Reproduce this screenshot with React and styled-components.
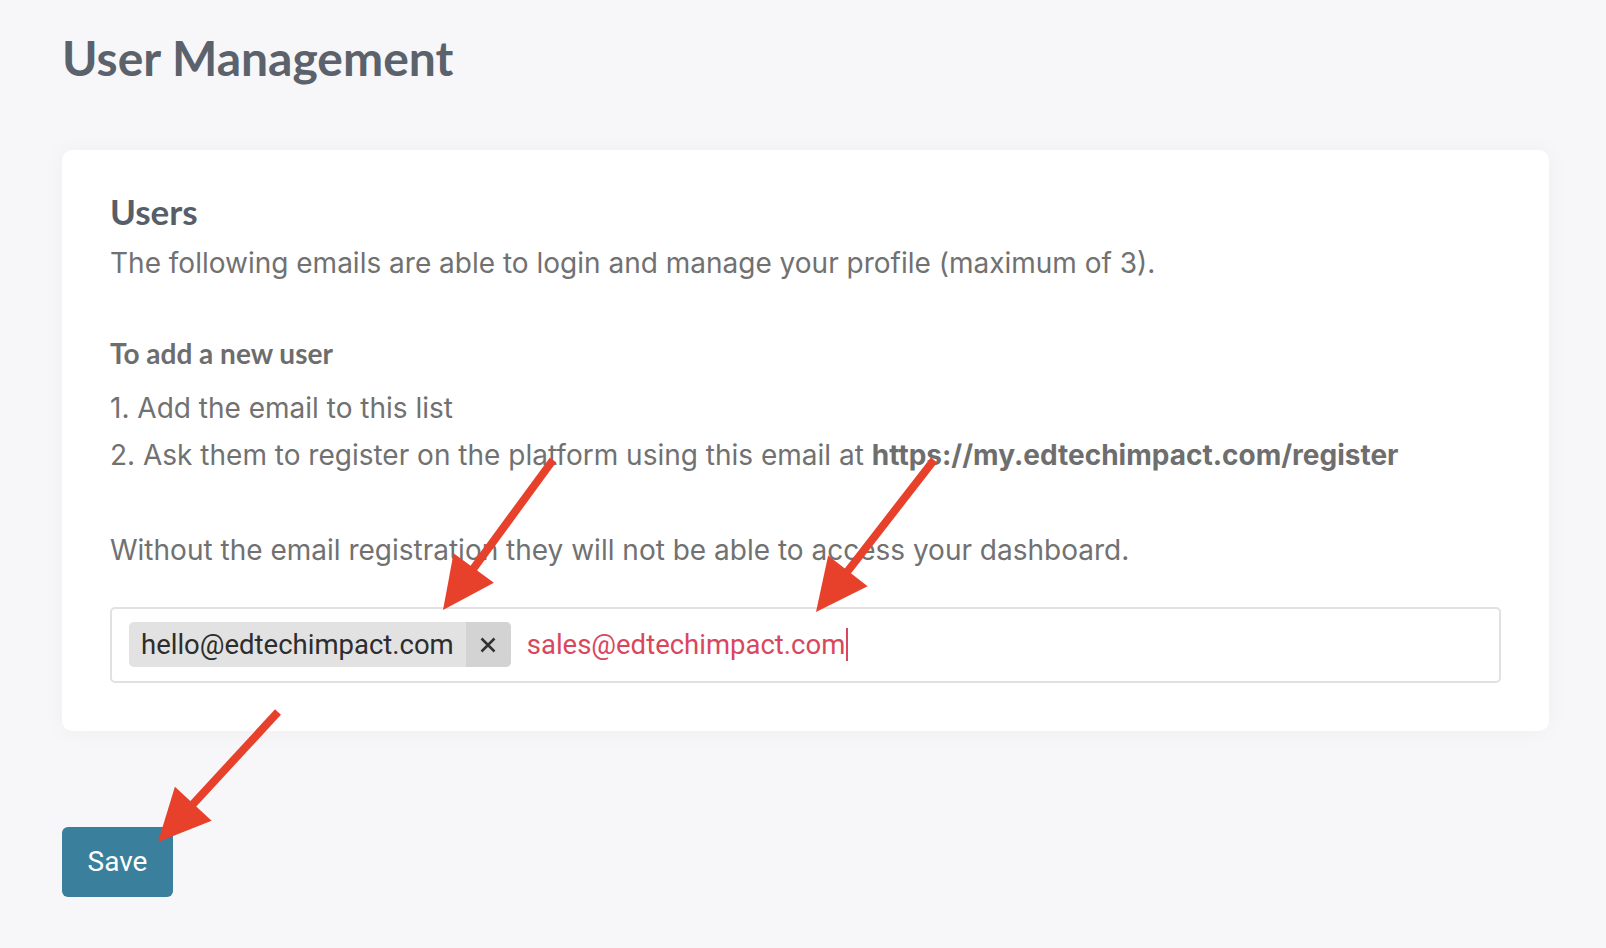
import React from "react";
import styled, { createGlobalStyle } from "styled-components";

const Global = createGlobalStyle`
  html, body { margin: 0; padding: 0; background: #f7f7f9; }
  body { font-family: Inter, "Noto Sans", sans-serif; }
  * { box-sizing: border-box; }
`;

const Page = styled.div`
  position: relative;
  min-height: 948px;
  padding: 29px 57px 40px 62px;
  background: #f7f7f9;
`;

const Title = styled.h1`
  margin: 0;
  font-family: Lato, "Open Sans", sans-serif;
  font-weight: 700;
  font-size: 48px;
  line-height: 58px;
  color: #5b626c;
`;

const Card = styled.section`
  margin-top: 63px;
  background: #ffffff;
  border-radius: 10px;
  box-shadow: 0 0 24px rgba(30, 40, 60, 0.04);
  padding: 40px 48px 48px 48px;
`;

const CardTitle = styled.h2`
  margin: 0;
  font-family: Lato, "Open Sans", sans-serif;
  font-weight: 700;
  font-size: 35px;
  line-height: 42px;
  color: #565e69;
`;

const Text = styled.p`
  margin: ${(p) => p.$mt || 0}px 0 0 0;
  font-family: Inter, sans-serif;
  font-size: 28px;
  line-height: 47.5px;
  color: #717171;
  & strong { font-weight: 700; color: #6e6e6e; }
`;

const SubHead = styled.h3`
  margin: 45.5px 0 0 0;
  font-family: Lato, "Open Sans", sans-serif;
  font-weight: 700;
  font-size: 28px;
  line-height: 40px;
  color: #6d6d6d;
`;

const TagInput = styled.div`
  margin-top: 32px;
  display: flex;
  align-items: center;
  gap: 16px;
  height: 76px;
  padding: 0 17px;
  border: 2px solid #e1e1e1;
  border-radius: 5px;
  background: #fff;
`;

const Chip = styled.div`
  display: flex;
  align-items: stretch;
  height: 45px;
  border-radius: 5px;
  overflow: hidden;
  background: #e2e2e2;
  font-family: Roboto, "Liberation Sans", sans-serif;
  font-size: 27.5px;
  color: #2d2d2d;
`;

const ChipLabel = styled.span`
  display: flex;
  align-items: center;
  padding: 0 12px 0 12px;
`;

const ChipRemove = styled.span`
  display: flex;
  align-items: center;
  justify-content: center;
  width: 45px;
  background: #d3d3d3;
  color: #333;
`;

const Typed = styled.span`
  font-family: Roboto, "Liberation Sans", sans-serif;
  font-size: 27.5px;
  color: #d9475f;
  display: flex;
  align-items: center;
`;

const Caret = styled.span`
  display: inline-block;
  width: 2px;
  height: 33px;
  margin-left: 1px;
  background: #d9475f;
`;

const SaveButton = styled.button`
  display: block;
  margin-top: 96px;
  width: 111px;
  height: 70px;
  padding: 0;
  border: none;
  border-radius: 6px;
  background: #3a7f9c;
  color: #fff;
  font-family: Roboto, "Liberation Sans", sans-serif;
  font-size: 28px;
  cursor: pointer;
`;

const Annotations = styled.svg`
  position: absolute;
  left: 0;
  top: 0;
  width: 1606px;
  height: 948px;
  pointer-events: none;
`;

function Arrow({ tail, tip, head = 52, width = 50, stroke = 8 }) {
  const [x1, y1] = tail;
  const [x2, y2] = tip;
  const dx = x2 - x1;
  const dy = y2 - y1;
  const len = Math.hypot(dx, dy);
  const ux = dx / len;
  const uy = dy / len;
  const bx = x2 - ux * head;
  const by = y2 - uy * head;
  const px = -uy * (width / 2);
  const py = ux * (width / 2);
  return (
    <g>
      <line x1={x1} y1={y1} x2={bx + ux * 4} y2={by + uy * 4} stroke="#e8412b" strokeWidth={stroke} />
      <polygon points={`${x2},${y2} ${bx + px},${by + py} ${bx - px},${by - py}`} fill="#e8412b" />
    </g>
  );
}

export default function App() {
  return (
    <>
      <Global />
      <Page>
        <Title>User Management</Title>
        <Card>
          <CardTitle>Users</CardTitle>
          <Text $mt={8}>The following emails are able to login and manage your profile (maximum of 3).</Text>
          <SubHead>To add a new user</SubHead>
          <Text $mt={11.5}>1. Add the email to this list</Text>
          <Text>
            2. Ask them to register on the platform using this email at{" "}
            <strong>https://my.edtechimpact.com/register</strong>
          </Text>
          <Text $mt={47.5}>Without the email registration they will not be able to access your dashboard.</Text>
          <TagInput>
            <Chip>
              <ChipLabel>hello@edtechimpact.com</ChipLabel>
              <ChipRemove>
                <svg width="18" height="18" viewBox="0 0 18 18">
                  <path d="M2.5 2.5 L15.5 15.5 M15.5 2.5 L2.5 15.5" stroke="#333" strokeWidth="2.5" />
                </svg>
              </ChipRemove>
            </Chip>
            <Typed>
              sales@edtechimpact.com
              <Caret />
            </Typed>
          </TagInput>
        </Card>
        <SaveButton>Save</SaveButton>
        <Annotations viewBox="0 0 1606 948">
          <Arrow tail={[553, 460]} tip={[443, 610]} />
          <Arrow tail={[934, 460]} tip={[816, 612]} />
          <Arrow tail={[278, 712]} tip={[158, 842]} />
        </Annotations>
      </Page>
    </>
  );
}
